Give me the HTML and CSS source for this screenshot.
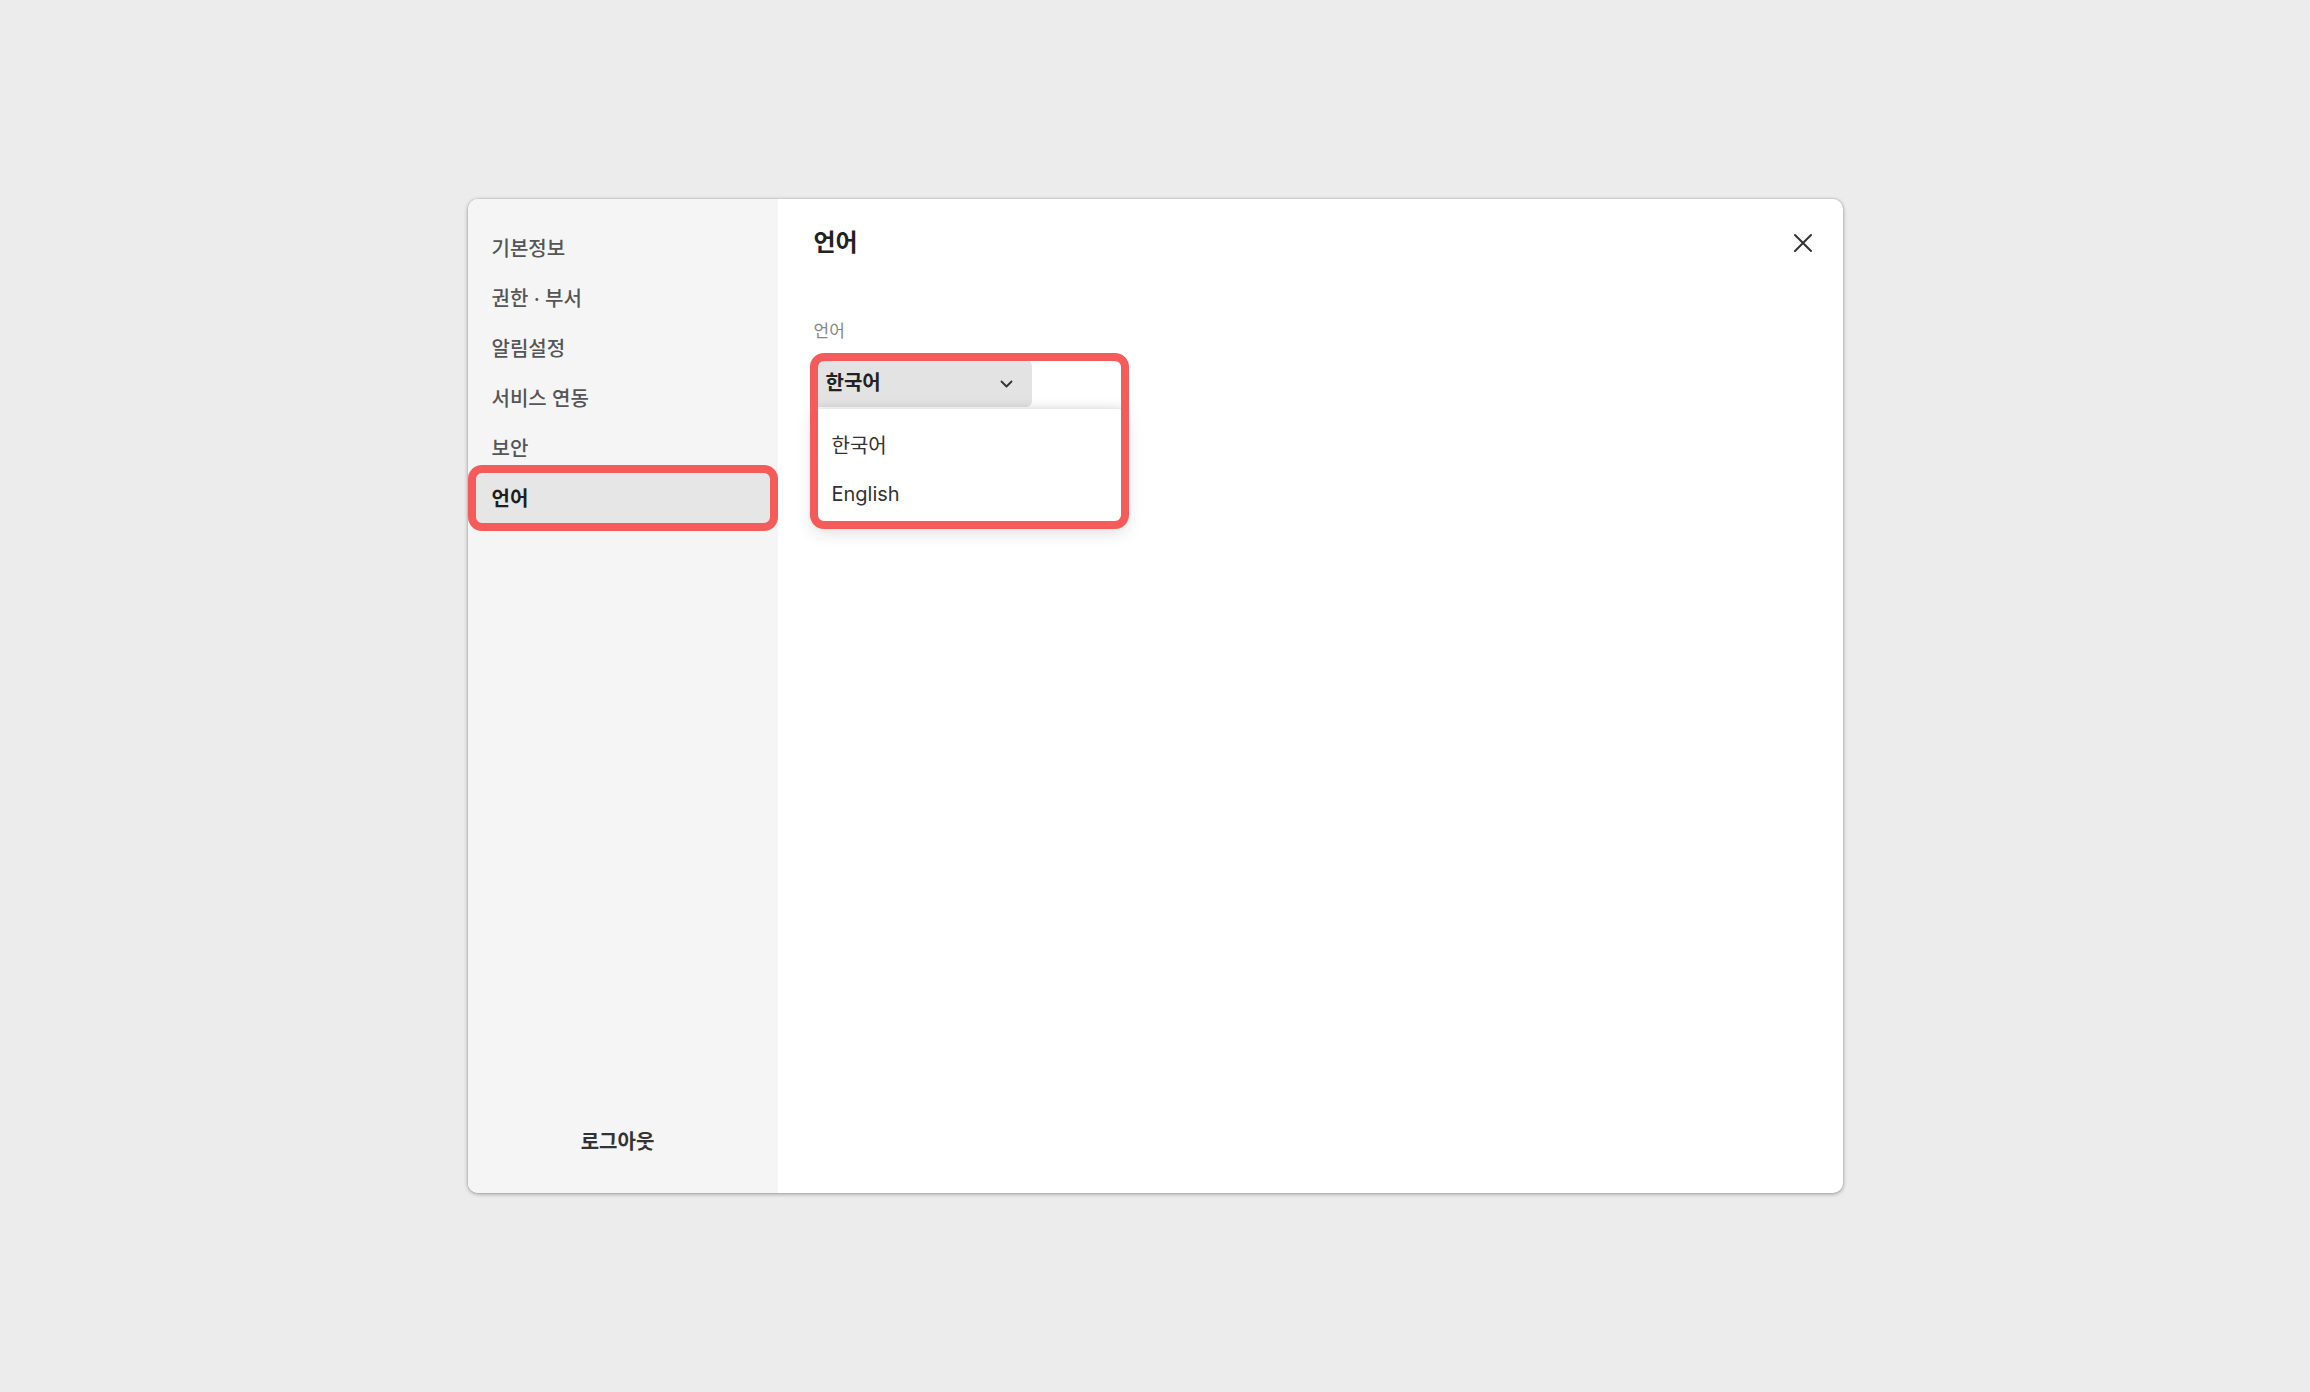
FILE: index.html
```html
<!DOCTYPE html>
<html lang="ko">
<head>
<meta charset="utf-8">
<title>설정 - 언어</title>
<link rel="stylesheet" href="styles.css">
</head>
<body>
<div class="modal">
  <aside class="sidebar">
    <nav class="nav">
      <div class="nav-item">기본정보</div>
      <div class="nav-item">권한 · 부서</div>
      <div class="nav-item">알림설정</div>
      <div class="nav-item">서비스 연동</div>
      <div class="nav-item">보안</div>
      <div class="nav-item active">언어</div>
    </nav>
    <div class="logout">로그아웃</div>
  </aside>
  <main class="content">
    <div class="header">
      <h1 class="title">언어</h1>
      <button class="close" aria-label="닫기">
        <svg width="20" height="20" viewBox="0 0 20 20"><path d="M2 2 L18 18 M18 2 L2 18" stroke="#333" stroke-width="2" stroke-linecap="round" fill="none"/></svg>
      </button>
    </div>
    <div class="field-label">언어</div>
    <div class="select-wrap">
      <div class="select">
        <span class="select-value">한국어</span>
        <svg class="chev" width="13" height="8" viewBox="0 0 13 8"><path d="M1.5 1.5 L6.5 6.5 L11.5 1.5" stroke="#333" stroke-width="1.8" stroke-linecap="round" stroke-linejoin="round" fill="none"/></svg>
      </div>
      <div class="dropdown">
        <div class="option">한국어</div>
        <div class="option">English</div>
      </div>
      <div class="highlight"></div>
    </div>
  </main>
</div>
</body>
</html>
```
FILE: styles.css
```css
* { box-sizing: border-box; }
html, body { margin: 0; padding: 0; }
body {
  background: #ececec;
  height: 100vh;
  display: flex;
  align-items: center;
  justify-content: center;
  font-family: Inter, "Noto Sans CJK KR", sans-serif;
  color: #222;
}
.modal {
  width: 1375px;
  height: 994px;
  background: #fff;
  border-radius: 10px;
  display: flex;
  overflow: hidden;
  box-shadow: 0 1px 4px rgba(0,0,0,0.35), 0 0 0 1px rgba(0,0,0,0.04);
}
.sidebar {
  width: 310px;
  flex: none;
  background: #f5f5f5;
  display: flex;
  flex-direction: column;
  padding: 24px 8px 28px;
}
.nav { display: flex; flex-direction: column; flex: 1; }
.nav-item {
  position: relative;
  height: 50px;
  display: flex;
  align-items: center;
  padding: 0 16px 2px;
  font-size: 20px;
  font-weight: 500;
  color: #555;
  border-radius: 6px;
}
.nav-item.active {
  background: #e6e6e6;
  color: #1e1e1e;
  font-weight: 600;
}
.nav-item.active::after {
  content: "";
  position: absolute;
  inset: -8px;
  border: 8px solid #f65b5b;
  border-radius: 14px;
}
.logout {
  height: 50px;
  display: flex;
  align-items: center;
  justify-content: center;
  font-size: 20px;
  font-weight: 600;
  color: #333;
  padding-right: 10px;
}
.content {
  flex: 1;
  padding: 0 30px 0 36px;
}
.header {
  height: 88px;
  display: flex;
  align-items: center;
  justify-content: space-between;
}
.title {
  margin: 0;
  font-size: 24px;
  font-weight: 600;
  color: #222;
  position: relative;
  top: -3px;
}
.close {
  border: 0;
  background: none;
  padding: 0;
  width: 20px;
  height: 20px;
  display: flex;
  cursor: pointer;
}
.field-label {
  margin-top: 32px;
  font-size: 17px;
  color: #888;
  line-height: 24px;
}
.select-wrap {
  position: relative;
  margin-top: 17px;
  width: 218px;
}
.select {
  height: 47px;
  background: #e3e3e3;
  border-radius: 6px;
  display: flex;
  align-items: center;
  justify-content: space-between;
  padding: 0 19px 4px 12px;
}
.select-value {
  font-size: 20px;
  font-weight: 600;
  color: #222;
}
.chev { display: block; margin-top: 5px; }
.dropdown {
  position: absolute;
  left: 0;
  top: 49px;
  width: 311px;
  background: #fff;
  border-radius: 6px;
  padding: 12px 0 8px;
  box-shadow: 0 -2px 6px rgba(0,0,0,0.06), 0 4px 18px rgba(0,0,0,0.16);
}
.option {
  height: 49px;
  display: flex;
  align-items: center;
  padding: 0 18px 2px;
  font-size: 20px;
  color: #333;
}
.highlight {
  position: absolute;
  left: -4px;
  top: -7px;
  width: 319px;
  height: 176px;
  border: 8px solid #f65b5b;
  border-radius: 14px;
  pointer-events: none;
}
```
